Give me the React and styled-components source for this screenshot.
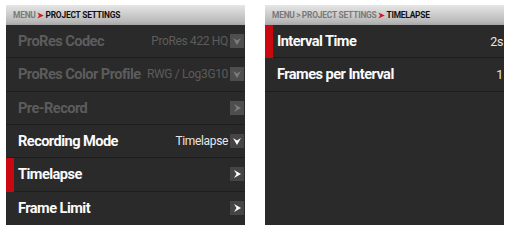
import React from "react";
import styled, { createGlobalStyle } from "styled-components";

const Global = createGlobalStyle`
  html, body { margin: 0; padding: 0; background: #fff; }
  body { font-family: Roboto, "Liberation Sans", sans-serif; }
`;

const Page = styled.div`
  display: flex;
  gap: 20px;
  padding: 5px 0 0 6px;
`;

const Panel = styled.div`
  width: 239px;
  display: flex;
  flex-direction: column;
  background: #2a2a2a;
  overflow: hidden;
`;

const Header = styled.div`
  height: 20px;
  display: flex;
  align-items: center;
  padding-left: 7px;
  background: linear-gradient(#e6e6e6, #b8b8b8 85%, #a6a6a6);
  font-family: Roboto, sans-serif;
  font-weight: 700;
  font-size: 8.4px;
  letter-spacing: -0.2px;
  white-space: nowrap;
`;

const Crumb = styled.span`
  color: ${(p) => (p.$current ? "#111" : "#7a7a7a")};
`;

const Sep = styled.span`
  color: ${(p) => (p.$red ? "#d8141c" : "#7a7a7a")};
  margin: 0 1.5px;
`;

const Body = styled.div`
  height: 200px;
  display: grid;
  grid-template-rows: repeat(6, 1fr);
`;

const Row = styled.div`
  position: relative;
  display: flex;
  align-items: center;
  padding: 0 1px 0 12px;
  border-bottom: 1px solid ${(p) => (p.$last ? "transparent" : "#1d1d1d")};
`;

const Marker = styled.div`
  position: absolute;
  left: 0;
  top: 0;
  bottom: -1px;
  width: 8px;
  background: #c90810;
`;

const Label = styled.div`
  flex: 1;
  font-weight: 700;
  font-size: 14.6px;
  letter-spacing: -0.55px;
  color: ${(p) => (p.$disabled ? "#5c5c5c" : "#fafafa")};
  white-space: nowrap;
`;

const Value = styled.div`
  font-size: ${(p) => p.$size || 12}px;
  letter-spacing: -0.35px;
  color: ${(p) => (p.$disabled ? "#5c5c5c" : "#e6e6e6")};
  margin-right: ${(p) => (p.$flush ? 0 : 2)}px;
  white-space: nowrap;
`;

const Icon = ({ kind, disabled }) => {
  const bg = disabled ? "#4e4e4e" : "#454545";
  const fg = disabled ? "#7e7e7e" : "#ffffff";
  return (
    <svg width="14" height="14" viewBox="0 0 14 14">
      <rect x="0" y="0" width="14" height="14" fill={bg} />
      {kind === "down" ? (
        <polygon points="3,4 7,6.5 11,4 7,11" fill={fg} />
      ) : (
        <polygon points="4,3 11,7 4,11 6.5,7" fill={fg} />
      )}
    </svg>
  );
};

const leftRows = [
  { label: "ProRes Codec", value: "ProRes 422 HQ", icon: "down", disabled: true },
  { label: "ProRes Color Profile", value: "RWG / Log3G10", icon: "down", disabled: true },
  { label: "Pre-Record", icon: "right", disabled: true },
  { label: "Recording Mode", value: "Timelapse", icon: "down" },
  { label: "Timelapse", icon: "right", selected: true },
  { label: "Frame Limit", icon: "right" },
];

const rightRows = [
  { label: "Interval Time", value: "2s", selected: true },
  { label: "Frames per Interval", value: "1" },
];

export default function App() {
  return (
    <>
      <Global />
      <Page>
        <Panel>
          <Header>
            <Crumb>MENU</Crumb>
            <Sep $red>➤</Sep>
            <Crumb $current>PROJECT SETTINGS</Crumb>
          </Header>
          <Body>
            {leftRows.map((r, i) => (
              <Row key={r.label} $last={i === leftRows.length - 1}>
                {r.selected && <Marker />}
                <Label $disabled={r.disabled}>{r.label}</Label>
                {r.value && <Value $disabled={r.disabled}>{r.value}</Value>}
                <Icon kind={r.icon} disabled={r.disabled} />
              </Row>
            ))}
          </Body>
        </Panel>
        <Panel>
          <Header>
            <Crumb>MENU</Crumb>
            <Sep>&gt;</Sep>
            <Crumb>PROJECT SETTINGS</Crumb>
            <Sep $red>➤</Sep>
            <Crumb $current>TIMELAPSE</Crumb>
          </Header>
          <Body>
            {rightRows.map((r) => (
              <Row key={r.label}>
                {r.selected && <Marker />}
                <Label>{r.label}</Label>
                <Value $size={12.5} $flush>{r.value}</Value>
              </Row>
            ))}
          </Body>
        </Panel>
      </Page>
    </>
  );
}
